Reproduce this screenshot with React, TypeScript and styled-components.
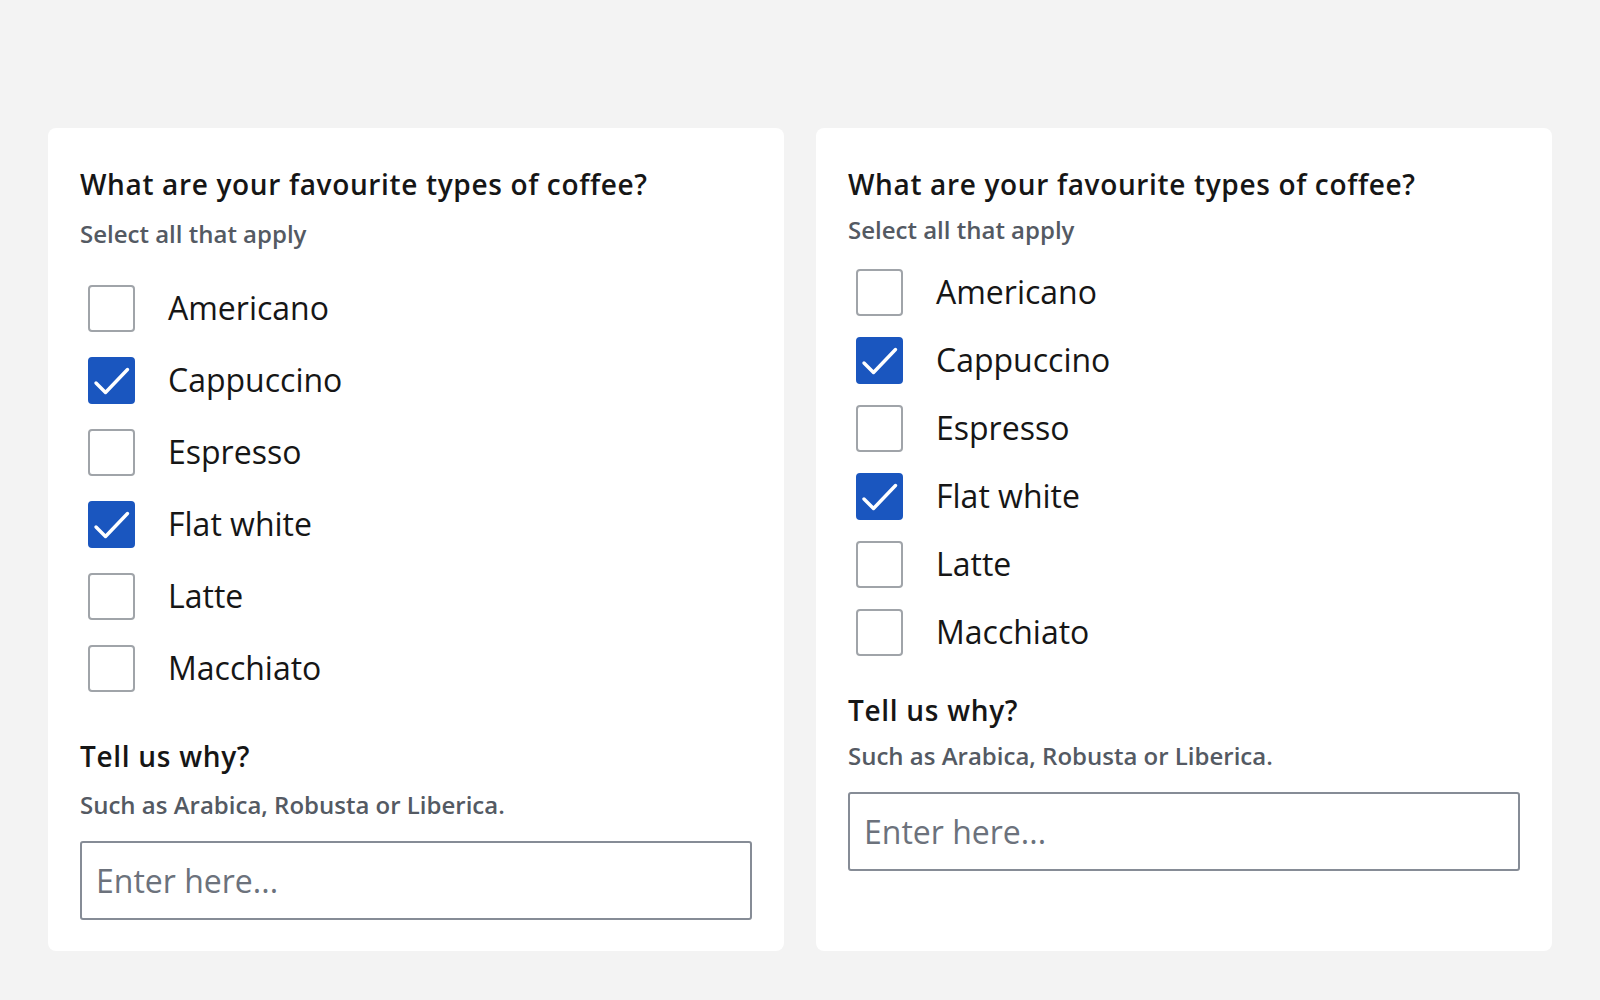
import React from 'react'
import styled, { createGlobalStyle, css } from 'styled-components'

const GlobalStyle = createGlobalStyle`
  html, body {
    margin: 0;
    padding: 0;
    background: #f3f3f3;
  }
  body {
    font-family: "Open Sans", "Noto Sans", sans-serif;
    color: #161616;
  }
`

const Page = styled.div`
  display: grid;
  grid-template-columns: 1fr 1fr;
  gap: 32px;
  padding: 128px 48px 49px;
  min-height: 1000px;
  box-sizing: border-box;
`

const Card = styled.div`
  background: #ffffff;
  border-radius: 8px;
  padding: 36px 32px 32px;
  height: 823px;
  box-sizing: border-box;
  display: flex;
  flex-direction: column;
`

const Fieldset = styled.fieldset`
  border: none;
  margin: 0;
  padding: 0;
  display: flex;
  flex-direction: column;
`

const Legend = styled.div`
  font-size: 28px;
  font-weight: 600;
  letter-spacing: 0.65px;
  line-height: 40px;
  color: #161616;
`

const Hint = styled.div<{ $gap: number }>`
  font-size: 24px;
  font-weight: 600;
  line-height: 32px;
  color: #545a63;
  margin-top: ${(p) => p.$gap}px;
`

const Options = styled.div<{ $dense?: boolean }>`
  display: flex;
  flex-direction: column;
  gap: ${(p) => (p.$dense ? '21px' : '25px')};
  margin-top: ${(p) => (p.$dense ? '22.5px' : '34.5px')};
  padding-left: 8px;
`

const Option = styled.label`
  display: flex;
  align-items: center;
  gap: 33px;
  font-size: 32px;
  line-height: 44px;
  color: #161616;
  cursor: pointer;
`

const Box = styled.span<{ $checked?: boolean }>`
  width: 47px;
  height: 47px;
  box-sizing: border-box;
  border-radius: 4px;
  flex: none;
  display: flex;
  align-items: center;
  justify-content: center;
  ${(p) =>
    p.$checked
      ? css`
          background: #1a56bf;
          border: 2px solid #1a56bf;
        `
      : css`
          background: #ffffff;
          border: 2px solid #a0a4a9;
        `}
`

const Section = styled.div<{ $dense?: boolean }>`
  margin-top: ${(p) => (p.$dense ? '34.5px' : '44.5px')};
  display: flex;
  flex-direction: column;
`

const Label = styled.div`
  font-size: 28px;
  font-weight: 600;
  letter-spacing: 0.7px;
  line-height: 40px;
  color: #161616;
`

const Input = styled.input`
  margin-top: 20px;
  height: 79px;
  box-sizing: border-box;
  border: 2px solid #868c96;
  border-radius: 3px;
  padding: 0 14px;
  font-family: "Open Sans", "Noto Sans", sans-serif;
  font-size: 32px;
  color: #161616;
  outline: none;
  &::placeholder {
    color: #6c727c;
  }
`

const coffees = ['Americano', 'Cappuccino', 'Espresso', 'Flat white', 'Latte', 'Macchiato']
const selected = ['Cappuccino', 'Flat white']

function Check() {
  return (
    <svg width="43" height="43" viewBox="0 0 43 43" fill="none">
      <path d="M6 24 L15.5 33.5 L37.5 10.5" stroke="#ffffff" strokeWidth="3.4" strokeLinecap="round" strokeLinejoin="round" />
    </svg>
  )
}

function CoffeeForm({ dense }: { dense?: boolean }) {
  return (
    <Card>
      <Fieldset>
        <Legend>What are your favourite types of coffee?</Legend>
        <Hint $gap={dense ? 10 : 14}>Select all that apply</Hint>
        <Options $dense={dense}>
          {coffees.map((c) => {
            const on = selected.includes(c)
            return (
              <Option key={c}>
                <Box $checked={on}>{on && <Check />}</Box>
                {c}
              </Option>
            )
          })}
        </Options>
      </Fieldset>
      <Section $dense={dense}>
        <Label>Tell us why?</Label>
        <Hint $gap={dense ? 10 : 13}>Such as Arabica, Robusta or Liberica.</Hint>
        <Input placeholder="Enter here..." />
      </Section>
    </Card>
  )
}

export default function App() {
  return (
    <>
      <GlobalStyle />
      <Page>
        <CoffeeForm />
        <CoffeeForm dense />
      </Page>
    </>
  )
}
